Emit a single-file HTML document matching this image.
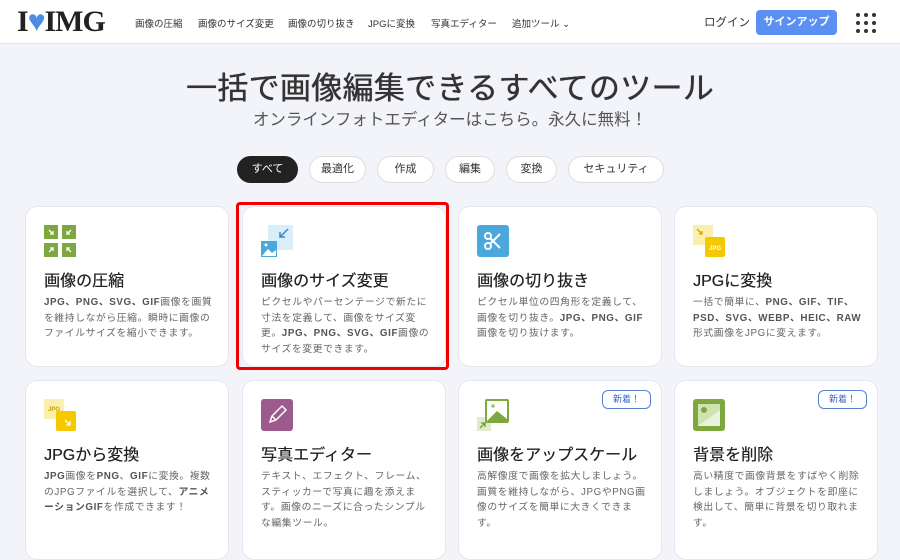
<!DOCTYPE html>
<html><head><meta charset="utf-8"><style>
*{margin:0;padding:0;box-sizing:border-box}
body{width:900px;height:549px;overflow:hidden;background:#f3f4f9;font-family:"Liberation Sans","Noto Sans CJK JP",sans-serif;position:relative;color:#222}
.hdr{position:absolute;left:0;top:0;width:900px;height:44px;background:#fff;border-bottom:1px solid #e3e4ec}
.logo{position:absolute;left:17px;top:5px;font-family:"Liberation Serif",serif;font-weight:bold;font-size:30px;color:#222;letter-spacing:-1px}
.nav{position:absolute;top:16px;font-size:9.5px;color:#333;white-space:nowrap}
.btn{position:absolute;left:756px;top:10px;width:81px;height:25px;background:#5b8ff2;border-radius:4px;color:#fff;font-size:11px;font-weight:bold;text-align:center;line-height:25px}
.dots{position:absolute;left:856px;top:13px;width:20px;height:20px}
.dots i{position:absolute;width:4px;height:4px;background:#333;border-radius:50%}
h1{position:absolute;left:0;width:900px;top:63px;text-align:center;font-size:31px;font-weight:normal;color:#333;letter-spacing:0.3px;text-shadow:0 0 0.6px #333,0.3px 0 0 #333}
.sub{position:absolute;left:0;width:900px;top:106px;text-align:center;font-size:16.5px;color:#555}
.pill{position:absolute;top:156px;height:27px;border:1px solid #ddd;background:#fff;border-radius:14px;font-size:11px;line-height:25px;text-align:center;color:#333}
.card{position:absolute;width:204px;background:#fff;border:1px solid #e6e7ee;border-radius:12px}
.card .ic{position:absolute;left:18px;top:18px;width:32px;height:32px}
.card h3{position:absolute;left:18px;top:60px;font-size:16px;font-weight:normal;color:#222;text-shadow:0.2px 0 0 #222}
.card p{position:absolute;left:18px;top:88px;width:170px;font-size:9.8px;line-height:15.5px;color:#666;letter-spacing:0.6px}
.card p b{color:#555}
.new{position:absolute;right:10px;top:9px;width:49px;height:19px;border:1px solid #5b7fcf;border-radius:6px;color:#3e67c4;font-size:9px;text-align:center;line-height:17px}
.red{position:absolute;left:236px;top:202px;width:213px;height:168px;border:3px solid #e00;border-radius:4px}
</style></head><body>
<div class="hdr">
<div class="logo">I<span style="color:#4a8de6">♥</span>IMG</div>
<span class="nav" style="left:135px">画像の圧縮</span>
<span class="nav" style="left:198px">画像のサイズ変更</span>
<span class="nav" style="left:288px">画像の切り抜き</span>
<span class="nav" style="left:368px">JPGに変換</span>
<span class="nav" style="left:431px">写真エディター</span>
<span class="nav" style="left:512px">追加ツール ⌄</span>
<span class="nav" style="left:704px;font-size:11.5px;top:14px">ログイン</span>
<div class="btn">サインアップ</div>
<div class="dots"><i style="left:0;top:0"></i><i style="left:8px;top:0"></i><i style="left:16px;top:0"></i><i style="left:0;top:8px"></i><i style="left:8px;top:8px"></i><i style="left:16px;top:8px"></i><i style="left:0;top:16px"></i><i style="left:8px;top:16px"></i><i style="left:16px;top:16px"></i></div>
</div>
<h1>一括で画像編集できるすべてのツール</h1>
<div class="sub">オンラインフォトエディターはこちら。永久に無料！</div>
<div class="pill" style="left:237px;width:61px;background:#222;border-color:#222;color:#fff">すべて</div>
<div class="pill" style="left:309px;width:57px">最適化</div>
<div class="pill" style="left:377px;width:57px">作成</div>
<div class="pill" style="left:445px;width:50px">編集</div>
<div class="pill" style="left:506px;width:51px">変換</div>
<div class="pill" style="left:568px;width:96px">セキュリティ</div>

<div class="card" style="left:25px;top:206px;height:161px">
<svg class="ic" viewBox="0 0 32 32"><rect x="0" y="0" width="14" height="14" fill="#7ea83f"/><rect x="18" y="0" width="14" height="14" fill="#7ea83f"/><rect x="0" y="18" width="14" height="14" fill="#7ea83f"/><rect x="18" y="18" width="14" height="14" fill="#7ea83f"/><g stroke="#fff" stroke-width="1.3" fill="none"><path d="M5 5l4 4M9 6v3H6M27 5l-4 4M23 6v3h3M5 27l4-4M6 23h3v3M27 27l-4-4M26 23h-3v3"/></g></svg>
<h3>画像の圧縮</h3><p><b>JPG、PNG、SVG、GIF</b>画像を画質を維持しながら圧縮。瞬時に画像のファイルサイズを縮小できます。</p></div>
<div class="card" style="left:242px;top:206px;height:161px">
<svg class="ic" viewBox="0 0 32 32"><rect x="7" y="0" width="25" height="25" rx="2" fill="#d9eef8"/><path d="M27 4l-8 8M19 7v5h5" stroke="#3a86c0" stroke-width="1.5" fill="none"/><rect x="0" y="16" width="16" height="16" fill="#4aa8dd"/><path d="M1 31l6-7 4 4 4-3v6z" fill="#fff"/><circle cx="5" cy="20" r="1.5" fill="#fff"/></svg>
<h3>画像のサイズ変更</h3><p>ピクセルやパーセンテージで新たに寸法を定義して、画像をサイズ変更。<b>JPG、PNG、SVG、GIF</b>画像のサイズを変更できます。</p></div>
<div class="card" style="left:458px;top:206px;height:161px">
<svg class="ic" viewBox="0 0 32 32"><rect width="32" height="32" rx="3" fill="#4aa8dd"/><circle cx="11" cy="11" r="3" stroke="#fff" stroke-width="2" fill="none"/><circle cx="11" cy="21" r="3" stroke="#fff" stroke-width="2" fill="none"/><path d="M13 13l10 10M13 19l10-10" stroke="#fff" stroke-width="2"/></svg>
<h3>画像の切り抜き</h3><p>ピクセル単位の四角形を定義して、画像を切り抜き。<b>JPG、PNG、GIF</b>画像を切り抜けます。</p></div>
<div class="card" style="left:674px;top:206px;height:161px">
<svg class="ic" viewBox="0 0 32 32"><rect width="20" height="20" fill="#fbefb0"/><path d="M4 4l5 5M9 6v3H6" stroke="#d4a800" stroke-width="1.3" fill="none"/><rect x="12" y="12" width="20" height="20" rx="2" fill="#f5c800"/><text x="22" y="25" font-size="6" fill="#fff" text-anchor="middle" font-family="Liberation Sans" font-weight="bold">JPG</text></svg>
<h3>JPGに変換</h3><p>一括で簡単に、<b>PNG、GIF、TIF、PSD、SVG、WEBP、HEIC、RAW</b>形式画像をJPGに変えます。</p></div>

<div class="card" style="left:25px;top:380px;height:180px">
<svg class="ic" viewBox="0 0 32 32"><rect width="20" height="20" fill="#fbefb0"/><text x="10" y="12" font-size="6" fill="#c9a000" text-anchor="middle" font-family="Liberation Sans" font-weight="bold">JPG</text><rect x="12" y="12" width="20" height="20" rx="2" fill="#f5c800"/><path d="M21 21l5 5M26 22v4h-4" stroke="#fff" stroke-width="1.3" fill="none"/></svg>
<h3>JPGから変換</h3><p><b>JPG</b>画像を<b>PNG</b>、<b>GIF</b>に変換。複数のJPGファイルを選択して、<b>アニメーションGIF</b>を作成できます！</p></div>
<div class="card" style="left:242px;top:380px;height:180px">
<svg class="ic" viewBox="0 0 32 32"><rect width="32" height="32" rx="3" fill="#9c5b8c"/><path d="M9 23l2-6 10-10 4 4-10 10z M11 17l4 4" stroke="#fff" stroke-width="1.5" fill="none"/></svg>
<h3>写真エディター</h3><p>テキスト、エフェクト、フレーム、スティッカーで写真に趣を添えます。画像のニーズに合ったシンプルな編集ツール。</p></div>
<div class="card" style="left:458px;top:380px;height:180px">
<div class="new">新着！</div>
<svg class="ic" viewBox="0 0 32 32"><rect x="0" y="18" width="14" height="14" fill="#dfeccc"/><path d="M3 29l5-5M4 24h4v4" stroke="#6a9a30" stroke-width="1.3" fill="none"/><rect x="8" y="0" width="24" height="24" rx="2" fill="#7ea83f"/><rect x="10" y="2" width="20" height="20" fill="#fff"/><path d="M10 22l10-10 10 8v2z" fill="#7ea83f"/><path d="M16 5v4M14 7h4" stroke="#7ea83f"/></svg>
<h3>画像をアップスケール</h3><p>高解像度で画像を拡大しましょう。画質を維持しながら、JPGやPNG画像のサイズを簡単に大きくできます。</p></div>
<div class="card" style="left:674px;top:380px;height:180px">
<div class="new">新着！</div>
<svg class="ic" viewBox="0 0 32 32"><rect width="32" height="32" rx="3" fill="#7ea83f"/><rect x="5" y="5" width="22" height="22" fill="#cfe3b0"/><path d="M5 27l22-16v16z" fill="#e9f2dc"/><circle cx="11" cy="11" r="3" fill="#7ea83f"/></svg>
<h3>背景を削除</h3><p>高い精度で画像背景をすばやく削除しましょう。オブジェクトを即座に検出して、簡単に背景を切り取れます。</p></div>
<div class="red"></div>
</body></html>
